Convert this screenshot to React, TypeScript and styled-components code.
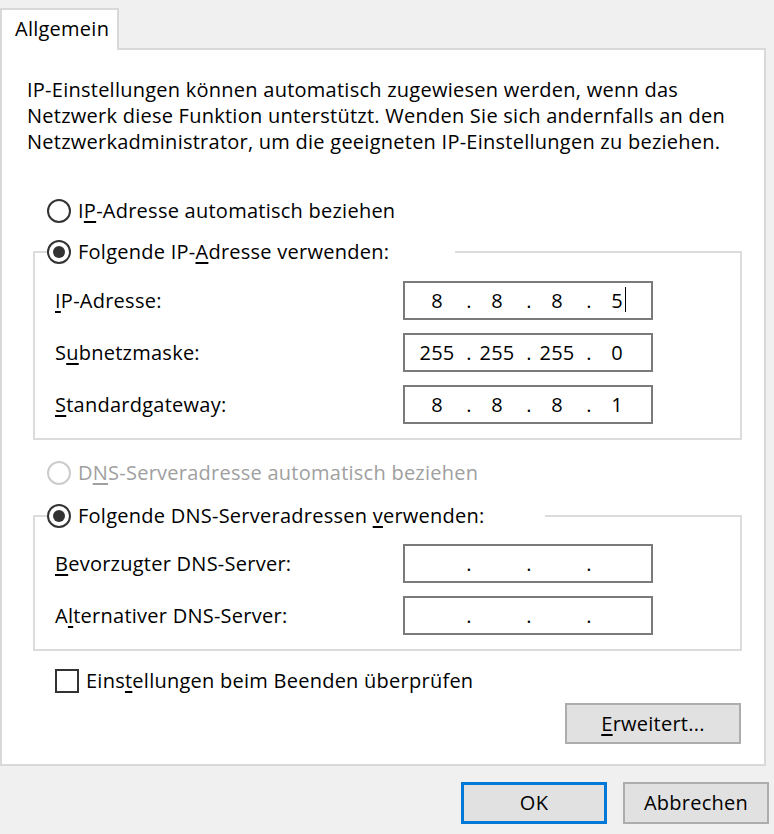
import * as React from "react";
import styled, { createGlobalStyle } from "styled-components";

const GlobalStyle = createGlobalStyle`
  html, body {
    margin: 0;
    padding: 0;
    background: #f0f0f0;
  }
  body {
    font-family: "Open Sans", "Noto Sans", sans-serif;
    font-size: 20px;
    letter-spacing: 0.25px;
    color: #000;
  }
`;

const Dialog = styled.div`
  width: 774px;
  height: 834px;
  box-sizing: border-box;
  padding-top: 8px;
  display: flex;
  flex-direction: column;
  line-height: 26px;
`;

const TabStrip = styled.div`
  display: flex;
`;

const Tab = styled.div`
  position: relative;
  z-index: 1;
  width: 119px;
  height: 42px;
  box-sizing: border-box;
  margin-bottom: -2px;
  padding: 6px 0 0 13px;
  background: #fff;
  border: 2px solid #d9d9d9;
  border-bottom: none;
`;

const Panel = styled.div`
  width: 766px;
  height: 718px;
  box-sizing: border-box;
  background: #fff;
  border: 2px solid #d9d9d9;
  display: flex;
  flex-direction: column;
`;

const Intro = styled.p`
  margin: 27px 0 0 25px;
  white-space: nowrap;
`;

const Key = styled.span`
  text-decoration: underline;
  text-decoration-thickness: 2px;
  text-underline-offset: 3px;
`;

const OptionRow = styled.div<{ $mt: number }>`
  margin: ${(p) => p.$mt}px 0 0 45px;
`;

const Option = styled.label<{ $disabled?: boolean }>`
  display: flex;
  align-items: center;
  gap: 7px;
  height: 26px;
  white-space: nowrap;
  color: ${(p) => (p.$disabled ? "#a0a0a0" : "#000")};
`;

const Radio = styled.span<{ $checked?: boolean; $disabled?: boolean }>`
  flex: none;
  width: 24px;
  height: 24px;
  box-sizing: border-box;
  border-radius: 50%;
  border: 2px solid ${(p) => (p.$disabled ? "#cccccc" : "#333333")};
  display: flex;
  align-items: center;
  justify-content: center;

  &::after {
    content: "";
    display: ${(p) => (p.$checked ? "block" : "none")};
    width: 12px;
    height: 12px;
    border-radius: 50%;
    background: #333333;
  }
`;

const Group = styled.fieldset<{ $mt: number }>`
  margin: ${(p) => p.$mt}px 22px 0 31px;
  padding: 0;
  border: 2px solid #dcdcdc;
  min-inline-size: 0;
`;

const Legend = styled.legend<{ $width: number }>`
  width: ${(p) => p.$width}px;
  margin-left: 12px;
  padding: 0;
`;

const GroupBody = styled.div<{ $pt: number; $pb: number }>`
  display: flex;
  flex-direction: column;
  gap: 13px;
  padding: ${(p) => p.$pt}px 87px ${(p) => p.$pb}px 20px;
`;

const Field = styled.div`
  display: flex;
  align-items: center;
  justify-content: space-between;
  height: 39px;
`;

const IpBox = styled.div`
  width: 250px;
  height: 39px;
  box-sizing: border-box;
  border: 2px solid #7a7a7a;
  padding-left: 8px;
  display: flex;
  align-items: center;
  background: #fff;
`;

const Octet = styled.span`
  width: 48px;
  text-align: center;
  white-space: nowrap;
`;

const Dot = styled.span`
  width: 12px;
  box-sizing: border-box;
  padding-left: 4px;
  text-align: center;
`;

const Caret = styled.span`
  display: inline-block;
  width: 1px;
  height: 25px;
  margin: 0 -3px 0 2px;
  background: #000;
  vertical-align: -4px;
`;

const CheckRow = styled.label`
  display: flex;
  align-items: center;
  gap: 7px;
  height: 26px;
  margin: 17px 0 0 53px;
  white-space: nowrap;
`;

const CheckBox = styled.span`
  flex: none;
  width: 24px;
  height: 24px;
  box-sizing: border-box;
  border: 2px solid #333333;
  background: #fff;
`;

const ButtonRow = styled.div<{ $mt: number; $mr: number }>`
  display: flex;
  justify-content: flex-end;
  gap: 16px;
  margin: ${(p) => p.$mt}px ${(p) => p.$mr}px 0 0;
`;

const Button = styled.button<{ $width: number; $height: number; $default?: boolean }>`
  width: ${(p) => p.$width}px;
  height: ${(p) => p.$height}px;
  box-sizing: border-box;
  padding: 0;
  font: inherit;
  letter-spacing: inherit;
  line-height: 26px;
  color: #000;
  background: #e1e1e1;
  border: ${(p) => (p.$default ? "3px solid #0078d7" : "2px solid #adadad")};
  border-radius: 0;
`;

const IpAddress: React.FC<{ parts?: string[]; caret?: boolean }> = ({ parts, caret }) => (
  <IpBox>
    {[0, 1, 2, 3].map((i) => (
      <React.Fragment key={i}>
        <Octet>
          {parts ? parts[i] : ""}
          {caret && i === 3 && <Caret />}
        </Octet>
        {i < 3 && <Dot>.</Dot>}
      </React.Fragment>
    ))}
  </IpBox>
);

export default function App() {
  return (
    <Dialog>
      <GlobalStyle />
      <TabStrip>
        <Tab>Allgemein</Tab>
      </TabStrip>
      <Panel>
        <Intro>
          IP-Einstellungen können automatisch zugewiesen werden, wenn das
          <br />
          Netzwerk diese Funktion unterstützt. Wenden Sie sich andernfalls an den
          <br />
          Netzwerkadministrator, um die geeigneten IP-Einstellungen zu beziehen.
        </Intro>

        <OptionRow $mt={43}>
          <Option>
            <Radio />
            <span>
              I<Key>P</Key>-Adresse automatisch beziehen
            </span>
          </Option>
        </OptionRow>

        <Group $mt={15}>
          <Legend $width={408}>
            <Option>
              <Radio $checked />
              <span>
                Folgende IP-<Key>A</Key>dresse verwenden:
              </span>
            </Option>
          </Legend>
          <GroupBody $pt={16} $pb={14}>
            <Field>
              <span>
                <Key>I</Key>P-Adresse:
              </span>
              <IpAddress parts={["8", "8", "8", "5"]} caret />
            </Field>
            <Field>
              <span>
                S<Key>u</Key>bnetzmaske:
              </span>
              <IpAddress parts={["255", "255", "255", "0"]} />
            </Field>
            <Field>
              <span>
                <Key>S</Key>tandardgateway:
              </span>
              <IpAddress parts={["8", "8", "8", "1"]} />
            </Field>
          </GroupBody>
        </Group>

        <OptionRow $mt={20}>
          <Option $disabled>
            <Radio $disabled />
            <span>
              D<Key>N</Key>S-Serveradresse automatisch beziehen
            </span>
          </Option>
        </OptionRow>

        <Group $mt={17}>
          <Legend $width={498}>
            <Option>
              <Radio $checked />
              <span>
                Folgende DNS-Serveradressen <Key>v</Key>erwenden:
              </span>
            </Option>
          </Legend>
          <GroupBody $pt={15} $pb={14}>
            <Field>
              <span>
                <Key>B</Key>evorzugter DNS-Server:
              </span>
              <IpAddress />
            </Field>
            <Field>
              <span>
                A<Key>l</Key>ternativer DNS-Server:
              </span>
              <IpAddress />
            </Field>
          </GroupBody>
        </Group>

        <CheckRow>
          <CheckBox />
          <span>
            Eins<Key>t</Key>ellungen beim Beenden überprüfen
          </span>
        </CheckRow>

        <ButtonRow $mt={9} $mr={23}>
          <Button $width={176} $height={41}>
            <Key>E</Key>rweitert...
          </Button>
        </ButtonRow>
      </Panel>

      <ButtonRow $mt={16} $mr={5}>
        <Button $width={146} $height={42} $default>
          OK
        </Button>
        <Button $width={146} $height={42}>
          Abbrechen
        </Button>
      </ButtonRow>
    </Dialog>
  );
}
